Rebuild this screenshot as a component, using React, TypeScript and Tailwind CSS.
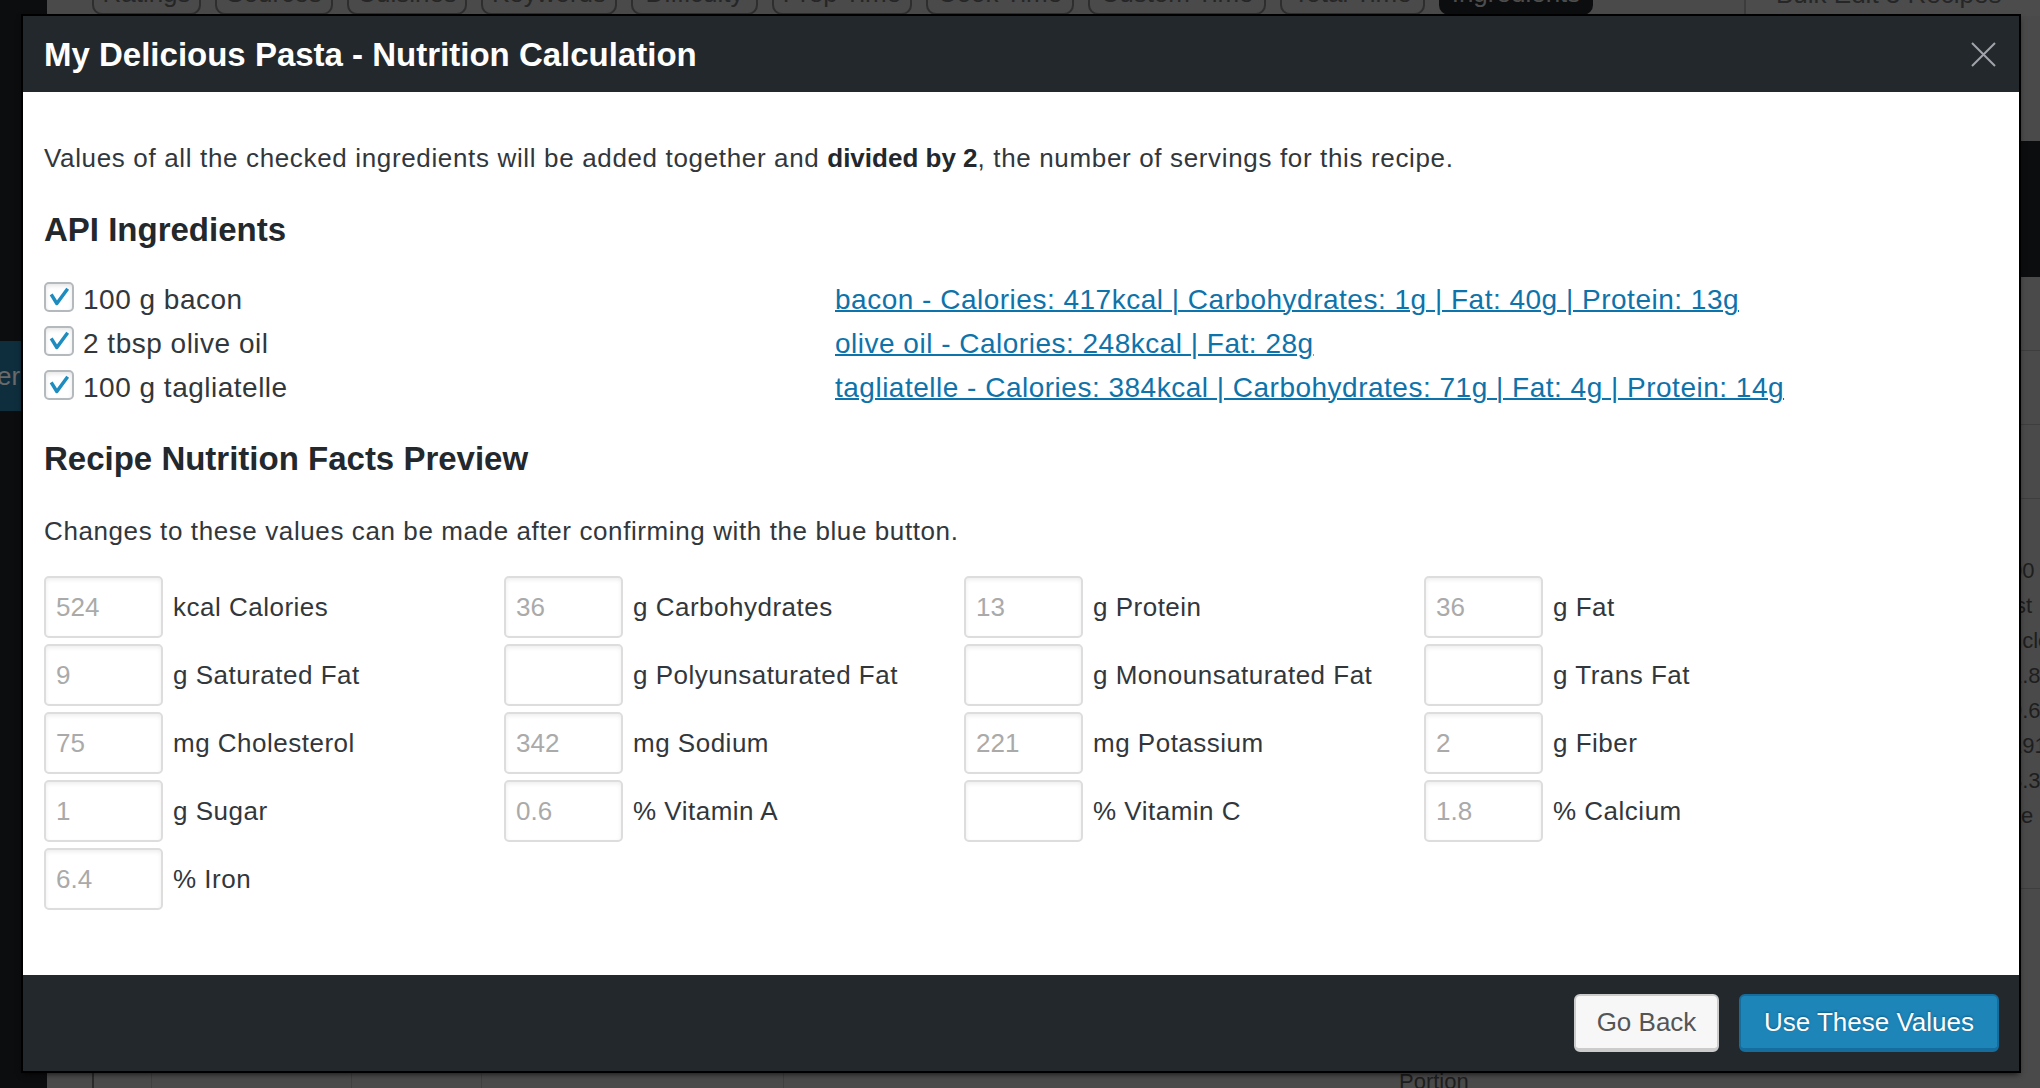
import React from "react";

const tabs = [
  { label: "Ratings", cls: "w-[109px]" },
  { label: "Sources", cls: "w-[118px]" },
  { label: "Cuisines", cls: "w-[120px]" },
  { label: "Keywords", cls: "w-[136px]" },
  { label: "Difficulty", cls: "w-[127px]" },
  { label: "Prep Time", cls: "w-[140px]" },
  { label: "Cook Time", cls: "w-[148px]" },
  { label: "Custom Time", cls: "w-[178px]" },
  { label: "Total Time", cls: "w-[145px]" },
];

const ingredients = [
  {
    name: "100 g bacon",
    match: "bacon - Calories: 417kcal | Carbohydrates: 1g | Fat: 40g | Protein: 13g",
  },
  { name: "2 tbsp olive oil", match: "olive oil - Calories: 248kcal | Fat: 28g" },
  {
    name: "100 g tagliatelle",
    match: "tagliatelle - Calories: 384kcal | Carbohydrates: 71g | Fat: 4g | Protein: 14g",
  },
];

const nutrients = [
  { value: "524", label: "kcal Calories" },
  { value: "36", label: "g Carbohydrates" },
  { value: "13", label: "g Protein" },
  { value: "36", label: "g Fat" },
  { value: "9", label: "g Saturated Fat" },
  { value: "", label: "g Polyunsaturated Fat" },
  { value: "", label: "g Monounsaturated Fat" },
  { value: "", label: "g Trans Fat" },
  { value: "75", label: "mg Cholesterol" },
  { value: "342", label: "mg Sodium" },
  { value: "221", label: "mg Potassium" },
  { value: "2", label: "g Fiber" },
  { value: "1", label: "g Sugar" },
  { value: "0.6", label: "% Vitamin A" },
  { value: "", label: "% Vitamin C" },
  { value: "1.8", label: "% Calcium" },
  { value: "6.4", label: "% Iron" },
];

// right-hand label column peeking out from under the modal
const sideRows = ["00", "ist", "nclo", "1.8", "9.6", "191", "3.3", "ite"];

function Checkbox() {
  return (
    <span className="mt-[4px] mr-[9px] flex h-[30px] w-[30px] shrink-0 items-center justify-center rounded-[5px] border-2 border-[#b4b9be] bg-white shadow-[inset_0_2px_4px_rgba(0,0,0,0.1)]">
      <svg width="30" height="30" viewBox="0 0 30 30" fill="none">
        <path d="M6 12 L12.5 22.5 L25 5.5" stroke="#1e8cbe" strokeWidth={4} strokeLinejoin="round" />
      </svg>
    </span>
  );
}

export default function App() {
  return (
    <div className="relative flex h-[1088px] w-[2040px] overflow-hidden bg-[#0c0d0f] font-['Liberation_Sans',Arial,sans-serif]">
      {/* dimmed admin page behind the modal */}
      <aside className="w-[47px] shrink-0 bg-[#0c0d0f]">
        <div className="mt-[341px] flex h-[70px] items-center overflow-hidden whitespace-nowrap bg-[#0f2e3d] text-[26px] text-[#6a6a6a]">
          <span className="-ml-[3px]">er</span>
        </div>
      </aside>

      <div className="flex flex-1 flex-col bg-[#4a4a4a]">
        <div className="flex h-[16px] shrink-0 gap-[14px] pl-[45px]">
          {tabs.map((t) => (
            <div
              key={t.label}
              className={`${t.cls} h-[15px] overflow-hidden rounded-b-[10px] border-2 border-t-0 border-[#2e2e2e] text-center text-[26px] leading-[28px] text-[#262626]`}
            >
              <div className="-mt-[21px] whitespace-nowrap">{t.label}</div>
            </div>
          ))}
          <div className="h-[15px] w-[154px] overflow-hidden rounded-b-[10px] bg-[#0c0d0f] text-center text-[26px] leading-[28px] text-[#4d4d4d]">
            <div className="-mt-[21px] whitespace-nowrap">Ingredients</div>
          </div>
          <div className="ml-[137px] h-[16px] flex-1 overflow-hidden border-l-2 border-[#3c3c3c] bg-[#4c4c4c] pl-[30px] text-[26px] leading-[28px] text-[#262626]">
            <div className="-mt-[20px] whitespace-nowrap">Bulk Edit 3 Recipes</div>
          </div>
        </div>

        <div className="flex flex-1">
          <div className="flex-1" />
          <div className="w-[40px] overflow-hidden">
            <div className="h-[125px]" />
            <div className="h-[136px] bg-[#0c0d0f]" />
            <div className="h-[74px] border-b border-[#3e3e3e]" />
            <div className="h-[74px] border-b border-[#3e3e3e]" />
            <div className="h-[74px] border-b border-[#3e3e3e]" />
            <div className="mt-[54px] pl-[10px] text-[22px] leading-[35px] text-[#1e1e1e]">
              {sideRows.map((r) => (
                <div key={r} className="whitespace-nowrap">
                  {r}
                </div>
              ))}
            </div>
            <div className="mt-[55px] border-b border-[#3e3e3e]" />
          </div>
        </div>

        <div className="flex h-[17px] shrink-0 text-[22px] text-[#1e1e1e]">
          <div className="w-[45px]" />
          <div className="w-[59px] border-l-2 border-[#2a2a2a]" />
          <div className="w-[200px] border-l border-[#404040]" />
          <div className="w-[130px] border-l border-[#404040]" />
          <div className="w-[302px] border-l border-[#404040]" />
          <div className="flex-1 border-l border-[#404040] pl-[615px] leading-[22px]">Portion</div>
        </div>
      </div>

      {/* modal */}
      <div className="absolute left-[23px] top-[16px] flex h-[1055px] w-[1996px] flex-col shadow-[0_0_0_2px_#000,0_3px_6px_rgba(0,0,0,0.7)]">
        <div className="flex h-[76px] shrink-0 items-center justify-between bg-[#23282d] pl-[21px] pr-[23px]">
          <h1 className="text-[33px] font-bold leading-none text-white">
            My Delicious Pasta - Nutrition Calculation
          </h1>
          <svg width="25" height="25" viewBox="0 0 25 25" fill="none">
            <path d="M1 1 L24 24 M24 1 L1 24" stroke="#a0a5aa" strokeWidth={2} />
          </svg>
        </div>

        <div className="flex-1 bg-white px-[21px] pt-[48px] text-[#32373c]">
          <p className="text-[26px] leading-[36px] tracking-[0.65px]">
            Values of all the checked ingredients will be added together and{" "}
            <strong className="font-bold tracking-normal text-[#23282d]">divided by 2</strong>, the number of servings
            for this recipe.
          </p>

          <h2 className="mt-[34px] text-[33px] font-bold leading-[40px] text-[#23282d]">API Ingredients</h2>

          <div className="mt-[28px] grid grid-cols-[791px_1fr] text-[28px] leading-[44px] tracking-[0.5px]">
            {ingredients.map((ing) => (
              <React.Fragment key={ing.name}>
                <label className="flex h-[44px] items-start">
                  <Checkbox />
                  <span>{ing.name}</span>
                </label>
                <div className="h-[44px]">
                  <a href="#" className="whitespace-nowrap text-[#0e73aa] underline decoration-2">
                    {ing.match}
                  </a>
                </div>
              </React.Fragment>
            ))}
          </div>

          <h2 className="mt-[29px] text-[33px] font-bold leading-[40px] text-[#23282d]">
            Recipe Nutrition Facts Preview
          </h2>
          <p className="mt-[34px] text-[26px] leading-[36px] tracking-[0.6px]">
            Changes to these values can be made after confirming with the blue button.
          </p>

          <div className="mt-[27px] grid grid-cols-[repeat(4,460px)] gap-y-[6px]">
            {nutrients.map((n) => (
              <div key={n.label} className="flex h-[62px] items-center">
                <input
                  type="text"
                  placeholder={n.value}
                  className="h-[62px] w-[119px] rounded-[5px] border-2 border-[#dddddd] bg-white pl-[10px] text-[26px] text-[#32373c] shadow-[inset_0_2px_4px_rgba(0,0,0,0.07)] outline-none placeholder:text-[#aaaaaa]"
                />
                <span className="ml-[10px] whitespace-nowrap text-[26px] tracking-[0.5px]">{n.label}</span>
              </div>
            ))}
          </div>
        </div>

        <div className="flex h-[96px] shrink-0 items-center justify-end gap-[20px] bg-[#23282d] pr-[20px]">
          <button className="h-[58px] w-[145px] rounded-[6px] border-2 border-b-4 border-[#cccccc] bg-[#f7f7f7] text-[26px] text-[#555555]">
            Go Back
          </button>
          <button className="h-[58px] w-[260px] rounded-[6px] border-2 border-b-4 border-[#146d9c] bg-[#1e85b9] text-[26px] text-white [text-shadow:0_-1px_2px_#0b5f8a]">
            Use These Values
          </button>
        </div>
      </div>
    </div>
  );
}
